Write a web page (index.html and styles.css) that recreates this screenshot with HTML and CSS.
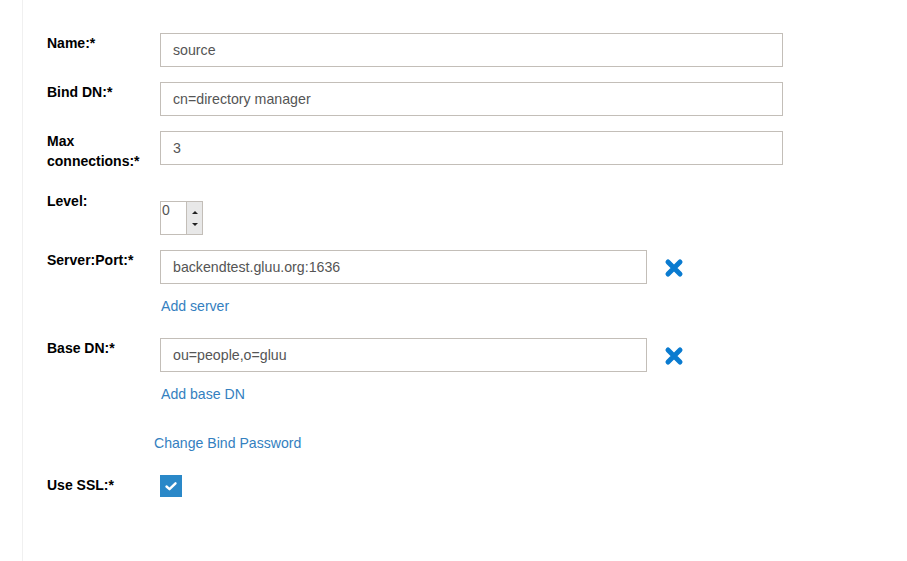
FILE: index.html
```html
<!DOCTYPE html>
<html>
<head>
<meta charset="utf-8">
<link rel="stylesheet" href="styles.css">
</head>
<body>
<div class="panel">
  <div class="row r-name">
    <div class="label">Name:*</div>
    <div class="ctrl"><div class="input wide">source</div></div>
  </div>
  <div class="row r-bind">
    <div class="label">Bind DN:*</div>
    <div class="ctrl"><div class="input wide">cn=directory manager</div></div>
  </div>
  <div class="row r-max">
    <div class="label">Max<br>connections:*</div>
    <div class="ctrl"><div class="input wide">3</div></div>
  </div>
  <div class="row r-level">
    <div class="label">Level:</div>
    <div class="ctrl">
      <div class="spinner">
        <div class="spin-val">0</div>
        <div class="spin-btns">
          <span class="tri up"></span>
          <span class="tri down"></span>
        </div>
      </div>
    </div>
  </div>
  <div class="row r-server">
    <div class="label">Server:Port:*</div>
    <div class="ctrl">
      <div class="line">
        <div class="input narrow">backendtest.gluu.org:1636</div>
        <svg class="remove" viewBox="0 0 20 20" width="20" height="20"><path d="M4 4 L16 16 M16 4 L4 16" stroke="#0a7bd0" stroke-width="5" stroke-linecap="round"/></svg>
      </div>
      <a class="link add">Add server</a>
    </div>
  </div>
  <div class="row r-base">
    <div class="label">Base DN:*</div>
    <div class="ctrl">
      <div class="line">
        <div class="input narrow">ou=people,o=gluu</div>
        <svg class="remove" viewBox="0 0 20 20" width="20" height="20"><path d="M4 4 L16 16 M16 4 L4 16" stroke="#0a7bd0" stroke-width="5" stroke-linecap="round"/></svg>
      </div>
      <a class="link add">Add base DN</a>
    </div>
  </div>
  <div class="pwd"><a class="link">Change Bind Password</a></div>
  <div class="row r-ssl">
    <div class="label">Use SSL:*</div>
    <div class="ctrl">
      <div class="check"><svg viewBox="0 0 22 22" width="22" height="22"><path d="M6.5 11.5 L9.5 14.2 L15.5 8.3" fill="none" stroke="#fff" stroke-width="2.4" stroke-linecap="round" stroke-linejoin="round"/></svg></div>
    </div>
  </div>
</div>
</body>
</html>
```

FILE: styles.css
```css
html, body {
  margin: 0;
  padding: 0;
  background: #fff;
}
body {
  font-family: "Liberation Sans", Arial, sans-serif;
  font-size: 14px;
  color: #000;
}
.panel {
  margin-left: 22px;
  border-left: 1px solid #f0f0f0;
  padding-left: 24px;
  padding-top: 33px;
  box-sizing: border-box;
  height: 561px;
}
.row {
  display: flex;
  align-items: flex-start;
}
.label {
  width: 113px;
  flex: none;
  font-weight: bold;
  line-height: 20px;
  color: #000;
}
.ctrl {
  display: flex;
  flex-direction: column;
}
.input {
  box-sizing: border-box;
  height: 34px;
  border: 1px solid #c3beb8;
  padding: 0 12px;
  line-height: 32px;
  color: #555;
  font-size: 14.2px;
}
.wide { width: 623px; }
.narrow { width: 487px; }
.r-name, .r-bind { margin-bottom: 15px; }
.r-max { margin-bottom: 20px; }
.r-level { margin-bottom: 15px; }
.spinner {
  margin-top: 10px;
  box-sizing: border-box;
  width: 43px;
  height: 34px;
  border: 1px solid #c3beb8;
  display: flex;
}
.spin-val {
  flex: 1;
  color: #555;
  font-size: 14px;
  line-height: 16px;
  padding-left: 1px;
}
.spin-btns {
  width: 16px;
  background: #e8e8e8;
  border-left: 1px solid #c3beb8;
  display: flex;
  flex-direction: column;
  align-items: center;
  justify-content: space-around;
  padding: 4px 0;
  box-sizing: border-box;
}
.tri {
  width: 0;
  height: 0;
  border-left: 3px solid transparent;
  border-right: 3px solid transparent;
}
.tri.up { border-bottom: 3px solid #222; }
.tri.down { border-top: 3px solid #222; }
.line {
  display: flex;
  align-items: center;
}
.remove {
  margin-left: 17px;
  margin-top: 2px;
}
.link {
  color: #3480c0;
  text-decoration: none;
  line-height: 20px;
  font-size: 14.1px;
  cursor: pointer;
}
.add {
  margin-top: 12px;
  margin-left: 1px;
}
.r-server { margin-bottom: 22px; }
.pwd {
  margin-top: 29px;
  padding-left: 107px;
  line-height: 20px;
}
.r-ssl { margin-top: 22px; }
.check {
  width: 22px;
  height: 22px;
  background: #2a88c8;
}
.check svg { display: block; }
```
